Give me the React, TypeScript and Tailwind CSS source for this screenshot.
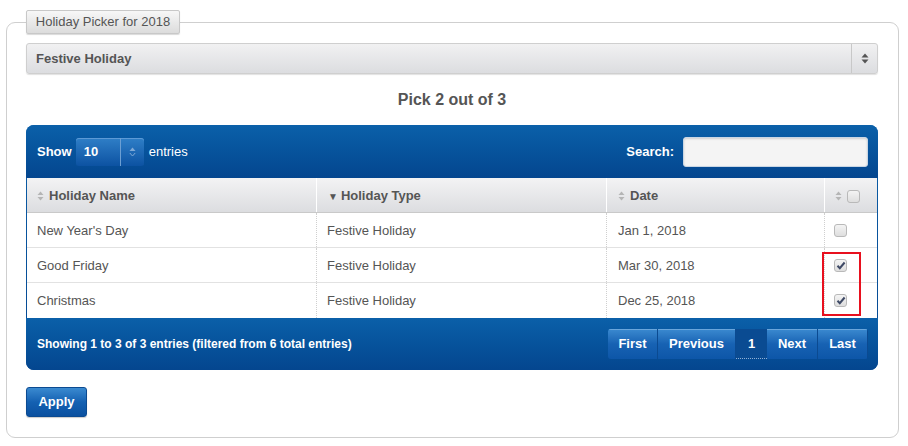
import React from "react"

const rows = [
  { name: "New Year's Day", type: "Festive Holiday", date: "Jan 1, 2018", checked: false },
  { name: "Good Friday", type: "Festive Holiday", date: "Mar 30, 2018", checked: true },
  { name: "Christmas", type: "Festive Holiday", date: "Dec 25, 2018", checked: true },
]

function SortIcon() {
  return (
    <svg width="7" height="10" viewBox="0 0 7 10" className="mr-[5px] shrink-0">
      <path d="M3.5 0.5 L6.5 4 H0.5 Z" fill="#b5b5b5" />
      <path d="M3.5 9.5 L6.5 6 H0.5 Z" fill="#b5b5b5" />
    </svg>
  )
}

function Check({ checked }: { checked: boolean }) {
  return (
    <div className="w-[13px] h-[13px] rounded-[3px] border border-[#b9b9b9] bg-gradient-to-b from-[#f4f4f4] to-[#dedede] flex items-center justify-center">
      {checked && (
        <svg width="10" height="9" viewBox="0 0 10 9">
          <path d="M1.5 4.8 L3.8 7.2 L8.6 1.5" stroke="#3f4a66" strokeWidth="2" fill="none" />
        </svg>
      )}
    </div>
  )
}

function PageBtn({ label, width, current }: { label: string; width: string; current?: boolean }) {
  return (
    <div
      className={
        (current
          ? "h-[30px] flex items-center justify-center text-white font-bold text-[13px] bg-[#0a4b92] border-b border-dotted border-[#8fb0d6] "
          : "h-[30px] flex items-center justify-center text-white font-bold text-[13px] bg-gradient-to-b from-[#3b8ad0] via-[#1762b3] to-[#0d56a8] border-r border-[#0b4a91] shadow-[inset_0_1px_0_#6aa6dc] ") + width
      }
    >
      {label}
    </div>
  )
}

export default function App() {
  return (
    <div className="w-[908px] h-[446px] bg-white pt-[10px] pl-[6px]" style={{ fontFamily: '"Liberation Sans", Arial, sans-serif' }}>
      <fieldset className="w-[893px] h-[428px] border border-[#cfcfcf] rounded-[9px] pl-[19px] pr-[20px] pt-[9px]">
        <legend className="h-[24px] w-[154px] px-0 flex items-center justify-center text-[13px] text-[#555] bg-gradient-to-b from-[#f7f7f7] to-[#dcdcdc] border border-[#c8c8c8] rounded-[2px] shadow-[0_1px_1px_rgba(0,0,0,0.15)]">
          Holiday Picker for 2018
        </legend>

        <div className="h-[31px] flex border border-[#cfcfcf] rounded-[3px] bg-gradient-to-b from-[#f1f1f2] to-[#dcdde0] shadow-[0_1px_1px_rgba(0,0,0,0.12)]">
          <div className="flex-1 flex items-center pl-[9px] text-[13px] font-bold text-[#555]">Festive Holiday</div>
          <div className="w-[26px] border-l border-[#c8c8c8] flex items-center justify-center">
            <svg width="8" height="11" viewBox="0 0 8 11">
              <path d="M4 0.5 L7.5 4.5 H0.5 Z" fill="#555" />
              <path d="M4 10.5 L7.5 6.5 H0.5 Z" fill="#555" />
            </svg>
          </div>
        </div>

        <div className="h-[51px] flex items-center justify-center text-[16px] font-bold text-[#555]">Pick 2 out of 3</div>

        <div className="relative rounded-[8px] overflow-hidden bg-gradient-to-b from-[#0c5fa8] to-[#054690]">
          <div className="h-[53px] flex items-center justify-between pl-[11px] pr-[10px] bg-gradient-to-b from-[#0b60a9] to-[#04468f]">
            <div className="flex items-center text-[13px] font-bold text-white">
              <span>Show</span>
              <div className="ml-[4px] h-[28px] w-[68px] flex rounded-[3px] bg-gradient-to-b from-[#2f7fc7] to-[#0c52a2] shadow-[inset_0_1px_0_#5c9ad6]">
                <div className="flex-1 flex items-center pl-[8px]">10</div>
                <div className="w-[24px] border-l border-[#6c9fd3] flex items-center justify-center">
                  <svg width="7" height="10" viewBox="0 0 7 10">
                    <path d="M3.5 0.5 L6.5 4 H0.5 Z" fill="#7fa9d6" />
                    <path d="M0.8 6 L3.5 9 L6.2 6" stroke="#7fa9d6" fill="none" />
                  </svg>
                </div>
              </div>
              <span className="ml-[5px] font-normal">entries</span>
            </div>
            <div className="flex items-center text-[13px] font-bold text-white">
              <span>Search:</span>
              <div className="ml-[9px] h-[30px] w-[185px] rounded-[3px] bg-[#f4f4f4] border border-[#c9d6e4] shadow-[inset_0_1px_2px_rgba(0,0,0,0.15)]" />
            </div>
          </div>

          <div className="mx-[1px] bg-white">
            <div className="h-[35px] flex text-[13px] font-bold text-[#555] bg-gradient-to-b from-[#f3f3f4] to-[#dcdde0] border-b border-[#c9c9c9]">
              <div className="w-[290px] flex items-center pl-[10px] pt-[2px] border-r border-white">
                <SortIcon />Holiday Name
              </div>
              <div className="w-[290px] flex items-center pl-[11px] pt-[2px] border-r border-white">
                <span className="text-[10px] mr-[3px]">▼</span>Holiday Type
              </div>
              <div className="w-[218px] flex items-center pl-[11px] pt-[2px] border-r border-white">
                <SortIcon />Date
              </div>
              <div className="flex-1 flex items-center pl-[10px] pt-[2px]">
                <SortIcon />
                <Check checked={false} />
              </div>
            </div>
            {rows.map((r, i) => (
              <div key={i} className={"h-[35px] flex text-[13px] text-[#555] " + (i < rows.length - 1 ? "border-b border-[#e2e2e2]" : "")}>
                <div className="w-[290px] flex items-center pl-[10px] pt-[1px] border-r border-dotted border-[#cfcfcf]">{r.name}</div>
                <div className="w-[290px] flex items-center pl-[10px] pt-[1px] border-r border-dotted border-[#cfcfcf]">{r.type}</div>
                <div className="w-[218px] flex items-center pl-[11px] pt-[1px] border-r border-dotted border-[#cfcfcf]">{r.date}</div>
                <div className="flex-1 flex items-center pl-[9px]">
                  <Check checked={r.checked} />
                </div>
              </div>
            ))}
          </div>

          <div className="h-[52px] flex items-center justify-between pl-[11px] pr-[10px] bg-gradient-to-b from-[#0b60a9] to-[#04468f]">
            <span className="text-[12px] font-bold text-white">Showing 1 to 3 of 3 entries (filtered from 6 total entries)</span>
            <div className="flex rounded-[3px] overflow-hidden">
              <PageBtn label="First" width="w-[50px]" />
              <PageBtn label="Previous" width="w-[78px]" />
              <PageBtn label="1" width="w-[31px]" current />
              <PageBtn label="Next" width="w-[51px]" />
              <PageBtn label="Last" width="w-[50px]" />
            </div>
          </div>

          <div className="absolute left-[796px] top-[127px] w-[39px] h-[64px] border-2 border-[#e8101e]" />
        </div>

        <div className="mt-[17px] h-[30px] w-[61px] flex items-center justify-center rounded-[3px] text-white font-bold text-[13px] bg-gradient-to-b from-[#3a8ad0] via-[#1461b2] to-[#0a50a0] border border-[#0b4a91] shadow-[0_1px_1px_rgba(0,0,0,0.2)]">
          Apply
        </div>
      </fieldset>
    </div>
  )
}
